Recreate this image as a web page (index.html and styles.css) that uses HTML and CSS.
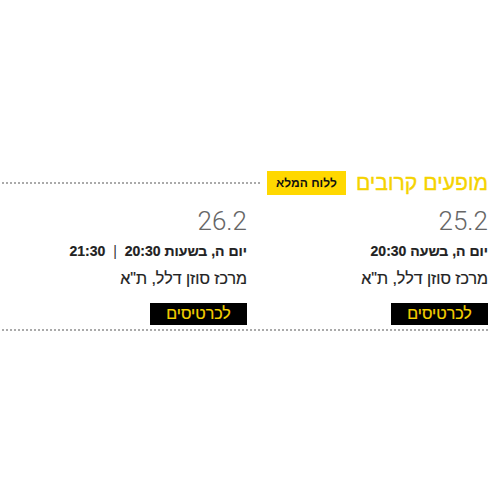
FILE: index.html
```html
<!DOCTYPE html>
<html lang="he" dir="rtl">
<head>
<meta charset="utf-8">
<link rel="stylesheet" href="styles.css">
</head>
<body>
<section class="shows">
  <div class="head">
    <h2 class="title">מופעים קרובים</h2>
    <a class="badge">ללוח המלא</a>
    <div class="dots"></div>
  </div>
  <div class="grid">
    <div class="show">
      <div class="date">25.2</div>
      <div class="time">יום ה, בשעה 20:30</div>
      <div class="place">מרכז סוזן דלל, ת"א</div>
      <a class="btn">לכרטיסים</a>
    </div>
    <div class="show">
      <div class="date">26.2</div>
      <div class="time">יום ה, בשעות 20:30 <span class="sep">|</span> 21:30</div>
      <div class="place">מרכז סוזן דלל, ת"א</div>
      <a class="btn">לכרטיסים</a>
    </div>
  </div>
  <div class="dots bottom"></div>
</section>
</body>
</html>
```
FILE: styles.css
```css
html, body { margin: 0; padding: 0; background: #fff; }
body { font-family: "Liberation Sans", Arial, sans-serif; color: #222; }
.shows { width: 488px; margin-right: 12px; padding-top: 170px; }
.head { display: flex; align-items: center; height: 26px; }
.title { margin: 0 0 0 10px; font-family: "Liberation Sans", Arial, sans-serif; font-size: 21.2px; font-weight: normal; -webkit-text-stroke: 0.4px #f5d300; color: #f5d300; line-height: 26px; }
.badge { background: #ffd800; color: #111; font-weight: bold; font-size: 12px; width: 79px; height: 24px; line-height: 24px; text-align: center; margin-left: 5px; }
.dots { flex: 1; height: 2px; background-image: linear-gradient(to left, #aaa 2px, transparent 2px); background-size: 4px 2px; }
.grid { display: grid; grid-template-columns: 241px 241px; }
.show { padding-top: 10px; }
.date { font-family: Roboto, sans-serif; font-weight: 300; font-size: 26px; color: #666; line-height: 30px; }
.time { font-weight: bold; font-size: 14px; margin-top: 6px; line-height: 18px; -webkit-text-stroke: 0.2px #222; }
.sep { font-weight: normal; margin: 0 4px; -webkit-text-stroke: 0; color: #333; }
.place { font-size: 16px; margin-top: 9px; line-height: 20px; -webkit-text-stroke: 0.2px #222; }
.btn { display: block; width: 97px; height: 22px; line-height: 22px; background: #000; color: #f5d300; font-size: 16px; text-align: center; margin-top: 14px; -webkit-text-stroke: 0.2px #f5d300; }
.bottom { height: 2px; margin-top: 4px; }
```
